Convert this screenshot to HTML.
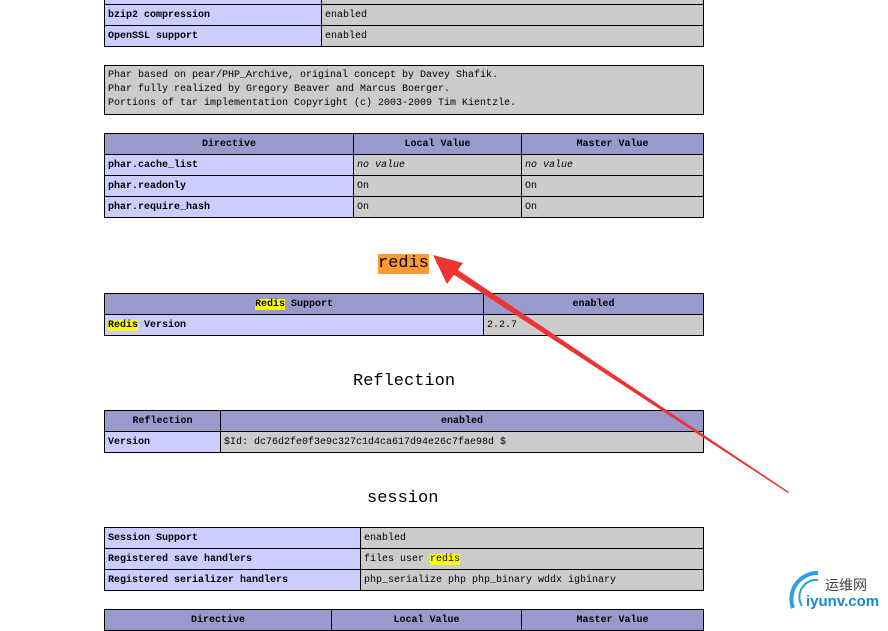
<!DOCTYPE html>
<html><head><meta charset="utf-8"><style>
body{margin:0;width:888px;height:620px;background:#fff;position:relative;overflow:hidden;font-family:"Liberation Mono",monospace;font-size:10px;color:#000}
.c{position:absolute;box-sizing:border-box;border:1px solid #000;padding:2px 3px 0;line-height:18px;height:22px;white-space:nowrap;overflow:hidden}
.e{background:#ccccff;font-weight:bold;color:#000}
.v{background:#cccccc}
.h{background:#9999cc;font-weight:bold;text-align:center}
.t{position:absolute;font-size:17px;line-height:20px}
.y{background:#ffff00}
i{font-style:italic}
</style></head><body>
<div class="c e" style="left:104px;top:-17px;width:218px"></div><div class="c v" style="left:321px;top:-17px;width:383px"></div>
<div class="c e" style="left:104px;top:4px;width:218px">bzip2 compression</div><div class="c v" style="left:321px;top:4px;width:383px">enabled</div>
<div class="c e" style="left:104px;top:25px;width:218px">OpenSSL support</div><div class="c v" style="left:321px;top:25px;width:383px">enabled</div>

<div class="c v" style="left:104px;top:65px;width:600px;height:50px;line-height:14px;padding-top:3px">Phar based on pear/PHP_Archive, original concept by Davey Shafik.<br>Phar fully realized by Gregory Beaver and Marcus Boerger.<br>Portions of tar implementation Copyright (c) 2003-2009 Tim Kientzle.</div>

<div class="c h" style="left:104px;top:133px;width:250px">Directive</div><div class="c h" style="left:353px;top:133px;width:169px">Local Value</div><div class="c h" style="left:521px;top:133px;width:183px">Master Value</div>
<div class="c e" style="left:104px;top:154px;width:250px">phar.cache_list</div><div class="c v" style="left:353px;top:154px;width:169px"><i>no value</i></div><div class="c v" style="left:521px;top:154px;width:183px"><i>no value</i></div>
<div class="c e" style="left:104px;top:175px;width:250px">phar.readonly</div><div class="c v" style="left:353px;top:175px;width:169px">On</div><div class="c v" style="left:521px;top:175px;width:183px">On</div>
<div class="c e" style="left:104px;top:196px;width:250px">phar.require_hash</div><div class="c v" style="left:353px;top:196px;width:169px">On</div><div class="c v" style="left:521px;top:196px;width:183px">On</div>

<div class="t" style="left:378px;top:254px;background:#ff9933;width:51px;text-align:center">redis</div>
<div class="c h" style="left:104px;top:293px;width:380px"><span class="y">Redis</span> Support</div><div class="c h" style="left:483px;top:293px;width:221px">enabled</div>
<div class="c e" style="left:104px;top:314px;width:380px"><span class="y">Redis</span> Version</div><div class="c v" style="left:483px;top:314px;width:221px">2.2.7</div>

<div class="t" style="left:353px;top:372px">Reflection</div>
<div class="c h" style="left:104px;top:410px;width:117px">Reflection</div><div class="c h" style="left:220px;top:410px;width:484px">enabled</div>
<div class="c e" style="left:104px;top:431px;width:117px">Version</div><div class="c v" style="left:220px;top:431px;width:484px">$Id: dc76d2fe0f3e9c327c1d4ca617d94e26c7fae98d $</div>

<div class="t" style="left:367px;top:489px">session</div>
<div class="c e" style="left:104px;top:527px;width:257px">Session Support</div><div class="c v" style="left:360px;top:527px;width:344px">enabled</div>
<div class="c e" style="left:104px;top:548px;width:257px">Registered save handlers</div><div class="c v" style="left:360px;top:548px;width:344px">files user <span class="y">redis</span></div>
<div class="c e" style="left:104px;top:569px;width:257px">Registered serializer handlers</div><div class="c v" style="left:360px;top:569px;width:344px">php_serialize php php_binary wddx igbinary</div>

<div class="c h" style="left:104px;top:609px;width:228px">Directive</div><div class="c h" style="left:331px;top:609px;width:191px">Local Value</div><div class="c h" style="left:521px;top:609px;width:183px">Master Value</div>

<svg style="position:absolute;left:0;top:0" width="888" height="620">
<polygon points="440,258 789,492 788,493 436,263" fill="#ee3333"/>
<polygon points="433,255 463,263 447,284" fill="#ee3333"/>
<path d="M793,608 A26,26 0 0 1 818,573" stroke="#2aa0e0" stroke-width="4" fill="none"/>
<path d="M802,606 A17,17 0 0 1 818,580" stroke="#2aa0e0" stroke-width="2" fill="none"/>
</svg>
<div style="position:absolute;left:825px;top:575px;font-family:'Noto Sans CJK SC',sans-serif;font-size:14px;color:#444">运维网</div>
<div style="position:absolute;left:806px;top:593px;font-family:'Liberation Sans',sans-serif;font-size:15px;font-weight:bold;color:#1a8ad0">iyunv.com</div>
</body></html>
